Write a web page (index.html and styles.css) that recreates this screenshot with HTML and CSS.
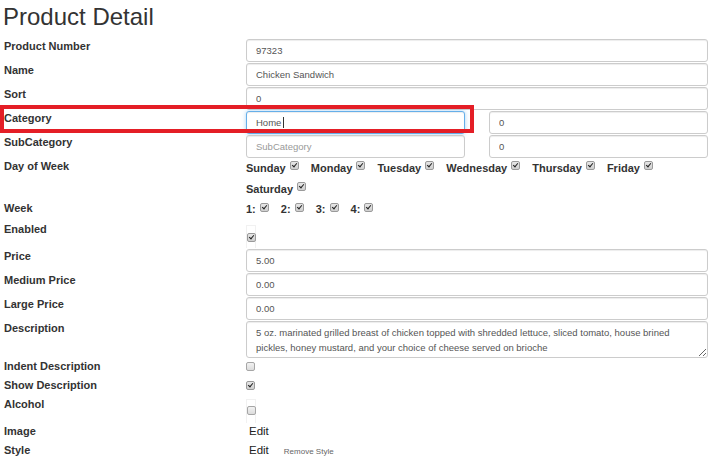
FILE: index.html
```html
<!DOCTYPE html>
<html>
<head>
<meta charset="utf-8">
<title>Product Detail</title>
<link rel="stylesheet" href="styles.css">
</head>
<body>
<div class="page">
  <h2 class="title">Product Detail</h2>
  <div class="form">
    <div class="row h24">
      <label class="lbl">Product Number</label>
      <div class="ctl"><input class="fc" type="text" value="97323"></div>
    </div>
    <div class="row h24">
      <label class="lbl">Name</label>
      <div class="ctl"><input class="fc" type="text" value="Chicken Sandwich"></div>
    </div>
    <div class="row h24">
      <label class="lbl">Sort</label>
      <div class="ctl"><input class="fc" type="text" value="0"></div>
    </div>
    <div class="row h24">
      <label class="lbl">Category</label>
      <div class="ctl split">
        <div class="fc focus">Home<span class="caret"></span></div>
        <input class="fc" type="text" value="0">
      </div>
    </div>
    <div class="row h24">
      <label class="lbl">SubCategory</label>
      <div class="ctl split">
        <input class="fc" type="text" placeholder="SubCategory">
        <input class="fc" type="text" value="0">
      </div>
    </div>
    <div class="row h42">
      <label class="lbl">Day of Week</label>
      <div class="ctl days">
        <span class="day">Sunday <input class="cb" type="checkbox" checked></span>
        <span class="day">Monday <input class="cb" type="checkbox" checked></span>
        <span class="day">Tuesday <input class="cb" type="checkbox" checked></span>
        <span class="day">Wednesday <input class="cb" type="checkbox" checked></span>
        <span class="day">Thursday <input class="cb" type="checkbox" checked></span>
        <span class="day">Friday <input class="cb" type="checkbox" checked></span>
        <span class="day">Saturday <input class="cb" type="checkbox" checked></span>
      </div>
    </div>
    <div class="row h21">
      <label class="lbl">Week</label>
      <div class="ctl weeks">
        <span class="wk">1: <input class="cb" type="checkbox" checked></span>
        <span class="wk">2: <input class="cb" type="checkbox" checked></span>
        <span class="wk">3: <input class="cb" type="checkbox" checked></span>
        <span class="wk">4: <input class="cb" type="checkbox" checked></span>
      </div>
    </div>
    <div class="row h27">
      <label class="lbl">Enabled</label>
      <div class="ctl"><span class="cbbox en"><input class="cb blk" type="checkbox" checked></span></div>
    </div>
    <div class="row h24">
      <label class="lbl">Price</label>
      <div class="ctl"><input class="fc" type="text" value="5.00"></div>
    </div>
    <div class="row h24">
      <label class="lbl">Medium Price</label>
      <div class="ctl"><input class="fc" type="text" value="0.00"></div>
    </div>
    <div class="row h24">
      <label class="lbl">Large Price</label>
      <div class="ctl"><input class="fc" type="text" value="0.00"></div>
    </div>
    <div class="row h38">
      <label class="lbl">Description</label>
      <div class="ctl"><textarea class="ta">5 oz. marinated grilled breast of chicken topped with shredded lettuce, sliced tomato, house brined pickles, honey mustard, and your choice of cheese served on brioche</textarea></div>
    </div>
    <div class="row h19">
      <label class="lbl">Indent Description</label>
      <div class="ctl"><input class="cb blk m4" type="checkbox"></div>
    </div>
    <div class="row h19">
      <label class="lbl">Show Description</label>
      <div class="ctl"><input class="cb blk m4" type="checkbox" checked></div>
    </div>
    <div class="row h27">
      <label class="lbl">Alcohol</label>
      <div class="ctl"><span class="cbbox al"><input class="cb blk" type="checkbox"></span></div>
    </div>
    <div class="row h19">
      <label class="lbl">Image</label>
      <div class="ctl"><a class="edit">Edit</a></div>
    </div>
    <div class="row h19">
      <label class="lbl">Style</label>
      <div class="ctl"><a class="edit">Edit</a><a class="remove">Remove Style</a></div>
    </div>
  </div>
  <div class="highlight"></div>
</div>
</body>
</html>
```

FILE: styles.css
```css
html, body {
  margin: 0;
  padding: 0;
  background: #fff;
}
body {
  font-family: "Liberation Sans", Arial, sans-serif;
  color: #333;
}
.page {
  position: relative;
  padding-left: 4px;
  width: 704px;
}
.title {
  margin: 0 0 4px -1px;
  font-size: 24px;
  line-height: 34px;
  font-weight: 400;
  color: #333;
}
.row {
  display: grid;
  grid-template-columns: 242px 462px;
}
.h24 { height: 24px; }
.h19 { height: 19px; }
.h21 { height: 21px; }
.h27 { height: 27px; }
.h38 { height: 38px; }
.h42 { height: 42px; }
.lbl {
  font-size: 11px;
  font-weight: 700;
  line-height: 16px;
  color: #333;
}
.ctl {
  font-size: 11px;
  line-height: 16px;
}
.h24 .ctl, .h38 .ctl { padding-top: 1px; }
.fc {
  display: block;
  box-sizing: border-box;
  width: 100%;
  height: 23px;
  margin: 0;
  padding: 0 9px;
  border: 1px solid #ccc;
  border-radius: 3px;
  background: #fff;
  box-shadow: inset 0 1px 1px rgba(0,0,0,.075);
  font-family: "Liberation Sans", Arial, sans-serif;
  font-size: 9.5px;
  line-height: 21px;
  color: #555;
  outline: none;
}
.fc::placeholder { color: #999; }
.focus {
  border-color: #66afe9;
  box-shadow: inset 0 1px 1px rgba(0,0,0,.075), 0 0 4px rgba(102,175,233,.55);
}
.caret {
  display: inline-block;
  width: 1px;
  height: 11px;
  margin-left: 2px;
  background: #333;
  vertical-align: -2px;
}
.split {
  display: grid;
  grid-template-columns: 219px 219px;
  column-gap: 24px;
}
.cb {
  -webkit-appearance: none;
  appearance: none;
  position: relative;
  box-sizing: border-box;
  width: 9px;
  height: 9px;
  margin: 0;
  border: 1px solid #a6a6a6;
  border-radius: 2px;
  background: linear-gradient(#f2f2f2, #dcdcdc);
  vertical-align: baseline;
}
.cb:checked {
  background: linear-gradient(#e6e6e6, #cfcfcf);
  border-color: #9a9a9a;
}
.cb:checked::after {
  content: "";
  position: absolute;
  left: 2px;
  top: 0;
  width: 2px;
  height: 4px;
  border: solid #222;
  border-width: 0 1.5px 1.5px 0;
  transform: rotate(40deg);
}
.blk { display: block; }
.m4 { margin-top: 4px; }
.days {
  display: flex;
  flex-wrap: wrap;
  margin-top: -0.5px;
}
.day {
  font-size: 11px;
  font-weight: 700;
  line-height: 21px;
  margin-right: 12px;
  white-space: nowrap;
  color: #333;
}
.day .cb, .wk .cb {
  margin-left: 1px;
  margin-bottom: 1.5px;
}
.weeks {
  display: flex;
  padding-top: 1px;
}
.wk {
  font-size: 11px;
  font-weight: 700;
  line-height: 16px;
  margin-right: 12px;
  white-space: nowrap;
  color: #333;
}
.cbbox {
  display: block;
  box-sizing: border-box;
  width: 10px;
  border: 1px solid #f1f1f1;
  border-bottom: none;
}
.cbbox.en {
  margin-top: 4px;
  height: 23px;
  padding-top: 7px;
}
.cbbox.al {
  margin-top: 3px;
  height: 24px;
  padding-top: 6px;
}
.ta {
  display: block;
  box-sizing: border-box;
  width: 100%;
  height: 37px;
  margin: 0;
  padding: 4px 9px;
  border: 1px solid #ccc;
  border-radius: 3px;
  box-shadow: inset 0 1px 1px rgba(0,0,0,.075);
  font-family: "Liberation Sans", Arial, sans-serif;
  font-size: 9.5px;
  line-height: 14.5px;
  color: #555;
  overflow: hidden;
  resize: vertical;
  outline: none;
}
.edit {
  font-size: 11.5px;
  line-height: 16px;
  margin-left: 3px;
  color: #222;
}
.remove {
  font-size: 8px;
  margin-left: 15px;
  color: #666;
}
.highlight {
  position: absolute;
  left: 0;
  top: 105px;
  width: 474px;
  height: 28px;
  box-sizing: border-box;
  border: 4px solid #e41e26;
  pointer-events: none;
}
```
